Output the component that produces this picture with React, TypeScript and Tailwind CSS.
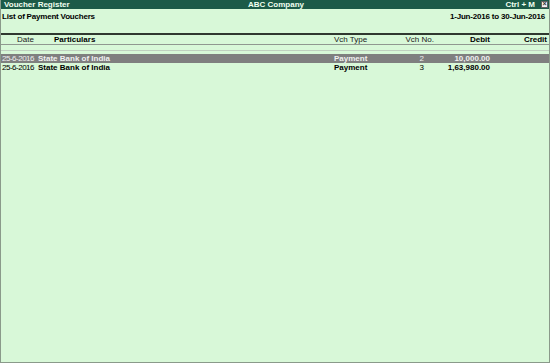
export default function App() {
  const rows = [
    { date: "25-6-2016", party: "State Bank of India", type: "Payment", no: "2", debit: "10,000.00", credit: "", active: true },
    { date: "25-6-2016", party: "State Bank of India", type: "Payment", no: "3", debit: "1,63,980.00", credit: "", active: false },
  ];

  return (
    <div className="w-[550px] h-[363px] bg-[#d8f8d8] border-l border-r border-b border-[#8a9a8a] flex flex-col text-[8px] leading-[9px] text-black font-['Liberation_Sans',Arial,sans-serif] overflow-hidden">
      <div className="h-[9px] bg-[#1c5a48] text-[#f0fff0] font-bold flex items-center pl-[3px] pr-[1px] shrink-0">
        <div className="flex-1">Voucher Register</div>
        <div className="flex-1 text-center">ABC Company</div>
        <div className="flex-1 flex justify-end items-center gap-[6px]">
          <span>Ctrl + M</span>
          <span className="w-[7px] h-[7px] bg-[#f0f0f0] border border-[#606060] text-[7px] leading-[4px] text-center text-[#303030]">×</span>
        </div>
      </div>
      <div className="flex justify-between font-bold pl-[1px] pr-[4px] pt-[3px] h-[26px] border-b-2 border-[#303830] shrink-0 tracking-[-0.2px]">
        <span>List of Payment Vouchers</span>
        <span>1-Jun-2016 to 30-Jun-2016</span>
      </div>
      <div className="flex items-center h-[10px] border-b border-[#909890] shrink-0">
        <div className="w-[33px] text-right text-[#202020]">Date</div>
        <div className="w-[300px] pl-[20px] font-bold">Particulars</div>
        <div className="w-[67px] text-[#202020]">Vch Type</div>
        <div className="w-[33px] text-right text-[#202020]">Vch No.</div>
        <div className="w-[56px] text-right font-bold">Debit</div>
        <div className="w-[57px] text-right font-bold">Credit</div>
      </div>
      <div className="h-[6px] border-b border-[#c0d0c0] shrink-0" />
      <div className="h-[3px] shrink-0" />
      {rows.map((r, i) => (
        <div
          key={i}
          className={`flex items-center h-[9px] shrink-0 ${r.active ? "bg-[#7f7f7f] text-[#f0f0f0]" : ""}`}
        >
          <div className="w-[33px] text-right tracking-[-0.5px]">{r.date}</div>
          <div className="w-[300px] pl-[4px] font-bold">{r.party}</div>
          <div className="w-[67px] font-bold">{r.type}</div>
          <div className="w-[33px] text-right pr-[10px]">{r.no}</div>
          <div className="w-[56px] text-right font-bold">{r.debit}</div>
          <div className="w-[57px] text-right font-bold">{r.credit}</div>
        </div>
      ))}
    </div>
  );
}
